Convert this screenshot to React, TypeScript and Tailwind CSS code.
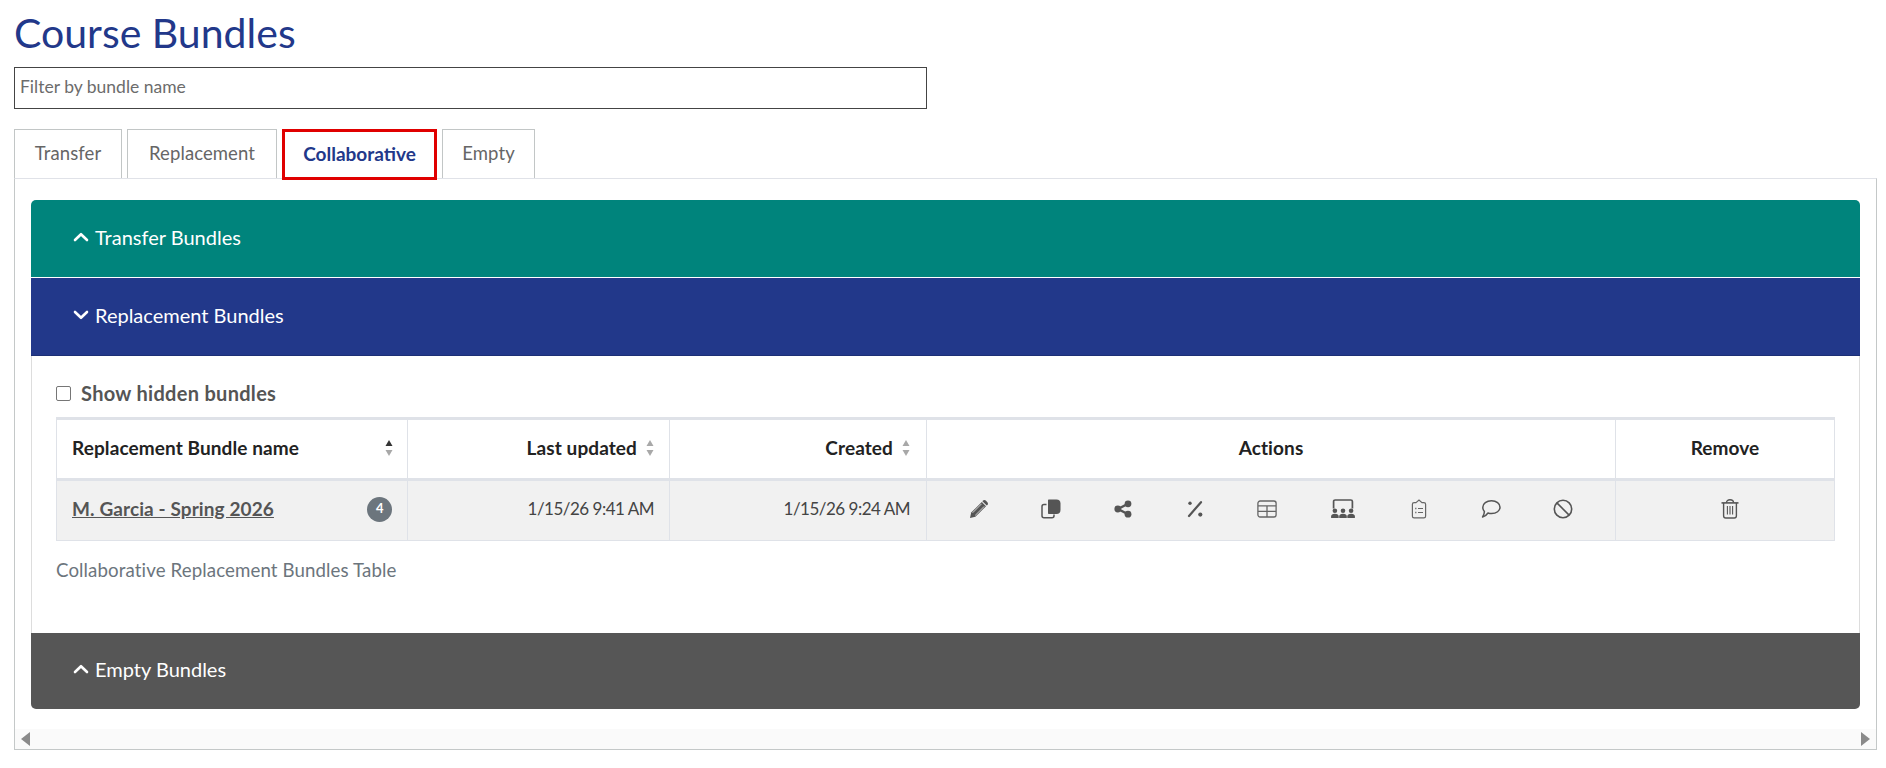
import React from "react";

const Chevron = ({ up }: { up: boolean }) => (
  <svg width="16" height="10" viewBox="0 0 16 10" className="shrink-0" fill="none" stroke="currentColor" strokeWidth="2.6" strokeLinecap="round" strokeLinejoin="round">
    {up ? <path d="M2 8 L8 2.2 L14 8" /> : <path d="M2 2 L8 7.8 L14 2" />}
  </svg>
);

const Sort = ({ active }: { active?: boolean }) => (
  <svg width="8" height="20" viewBox="0 0 8 20" className="shrink-0">
    <path d="M4 2 L7.5 8 L0.5 8 Z" fill={active ? "#333333" : "#a8a8a8"} />
    <path d="M4 18 L7.5 12 L0.5 12 Z" fill="#a8a8a8" />
  </svg>
);

const c = "#555555";
const Pencil = () => (
  <svg width="20" height="20" viewBox="0 0 20 20">
    <path d="M12.8 3 L17 7.2 L6.4 17.8 L1 19 L2.2 13.6 Z" fill={c} />
    <path d="M14 1.6 C14.8 0.8 16 0.8 16.8 1.6 L18.4 3.2 C19.2 4 19.2 5.2 18.4 6 L17.7 6.6 L13.4 2.3 Z" fill={c} />
    <path d="M3.6 13.8 L12.6 4.8 M6.2 16.4 L15.2 7.4" stroke="#f1f1f1" strokeWidth="0.8" />
  </svg>
);
const Copy = () => (
  <svg width="20" height="20" viewBox="0 0 20 20">
    <path d="M8 0.5 H15.5 C18 0.5 19.5 2 19.5 4.5 V11 C19.5 13.5 18 15 15.5 15 H8 C7.4 15 7 14.6 7 14 V1.5 C7 0.9 7.4 0.5 8 0.5 Z" fill={c} />
    <path d="M5.5 5.5 H3 C1.8 5.5 1 6.3 1 7.5 V16.8 C1 18 1.8 18.8 3 18.8 H11 C12.2 18.8 13 18 13 16.8 V15.5" fill="none" stroke={c} strokeWidth="1.5" />
  </svg>
);
const Share = () => (
  <svg width="20" height="20" viewBox="0 0 20 20">
    <path d="M15 4.8 L5 10 L15 15.2" fill="none" stroke={c} strokeWidth="2.4" />
    <circle cx="15" cy="4.8" r="3.4" fill={c} />
    <circle cx="4.8" cy="10" r="3.4" fill={c} />
    <circle cx="15" cy="15.2" r="3.4" fill={c} />
  </svg>
);
const Percent = () => (
  <svg width="20" height="20" viewBox="0 0 20 20">
    <path d="M16 3.2 L4 17" stroke={c} strokeWidth="2.2" strokeLinecap="round" />
    <circle cx="5" cy="4.2" r="1.7" fill={c} />
    <circle cx="15.3" cy="15.6" r="2.1" fill={c} />
  </svg>
);
const TableIcon = () => (
  <svg width="20" height="20" viewBox="0 0 20 20" fill="none" stroke="#666666" strokeWidth="1.3">
    <rect x="0.9" y="2" width="18.2" height="16" rx="2.2" />
    <path d="M1 6.8 H19 M1 12.3 H19 M10 6.8 V18" />
  </svg>
);
const Classroom = () => (
  <svg width="24" height="20" viewBox="0 0 24 20">
    <path d="M2.6 9.5 V2.6 C2.6 1.6 3.2 1 4.2 1 H19.8 C20.8 1 21.4 1.6 21.4 2.6 V9.5" fill="none" stroke={c} strokeWidth="1.7" />
    {[3.9, 12, 20.1].map((x) => (
      <g key={x}>
        <circle cx={x} cy="11.8" r="2.3" fill={c} />
        <path d={`M${x - 3.8} 19 V17.4 C${x - 3.8} 15.6 ${x - 2.4} 14.8 ${x} 14.8 C${x + 2.4} 14.8 ${x + 3.8} 15.6 ${x + 3.8} 17.4 V19 Z`} fill={c} />
      </g>
    ))}
  </svg>
);
const Clipboard = () => (
  <svg width="20" height="20" viewBox="0 0 20 20" fill="none" stroke="#666666" strokeWidth="1.2">
    <path d="M7 3.6 L10 1 L13 3.6 H14.9 C16 3.6 16.6 4.2 16.6 5.3 V17.2 C16.6 18.3 16 18.9 14.9 18.9 H5.1 C4 18.9 3.4 18.3 3.4 17.2 V5.3 C3.4 4.2 4 3.6 5.1 3.6 Z" />
    <path d="M9 9.5 H14 M9 13.5 H14" />
    <path d="M6.2 9.5 H7.4 M6.2 13.5 H7.4" strokeWidth="1.6" />
  </svg>
);
const Comment = () => (
  <svg width="20" height="20" viewBox="0 0 20 20" fill="none" stroke={c} strokeWidth="1.5">
    <path d="M10.5 1.8 C15.4 1.8 19 4.6 19 8.2 C19 11.8 15.4 14.6 10.5 14.6 C9.2 14.6 8 14.4 7 14 C5.6 16 3.6 17.6 1.6 18 C2.6 16.4 3.4 14.6 3.4 12.6 C2.4 11.4 1.8 9.8 1.8 8.2 C1.8 4.6 5.6 1.8 10.5 1.8 Z" strokeLinejoin="round" />
  </svg>
);
const Ban = () => (
  <svg width="20" height="20" viewBox="0 0 20 20" fill="none" stroke={c} strokeWidth="1.6">
    <circle cx="10" cy="10" r="8.7" />
    <path d="M3.9 3.9 L16.1 16.1" />
  </svg>
);
const Trash = () => (
  <svg width="20" height="20" viewBox="0 0 20 20" fill="none" stroke={c} strokeWidth="1.4">
    <path d="M6.5 3.8 C6.5 1.6 8 0.8 10 0.8 C12 0.8 13.5 1.6 13.5 3.8" />
    <path d="M1.5 3.9 H18.5" strokeWidth="1.6" />
    <path d="M3.6 4 V16.8 C3.6 18.2 4.5 19 5.8 19 H14.2 C15.5 19 16.4 18.2 16.4 16.8 V4" />
    <path d="M7.4 7 V15.5 M10 7 V15.5 M12.6 7 V15.5" strokeWidth="1.1" />
  </svg>
);

const actions = [
  { I: Pencil, w: "w-[73px]" },
  { I: Copy, w: "w-[72px]" },
  { I: Share, w: "w-[72px]" },
  { I: Percent, w: "w-[72px]" },
  { I: TableIcon, w: "w-[72px]" },
  { I: Classroom, w: "w-[80px]" },
  { I: Clipboard, w: "w-[72px]" },
  { I: Comment, w: "w-[72px]" },
  { I: Ban, w: "w-[72px]" },
];

const Tab = ({ label, w }: { label: string; w: string }) => (
  <div className={`${w} h-[49px] flex items-center justify-center border border-b-0 border-[#c2c6c6] text-[18.5px] tracking-[0.1px] text-[#666666]`}>{label}</div>
);

const Head = ({ up, label, bg, h }: { up: boolean; label: string; bg: string; h: string }) => (
  <div className={`${bg} ${h} flex items-center pb-[4px] pl-[42px] gap-[6px] text-white text-[20px]`}>
    <Chevron up={up} />
    <span>{label}</span>
  </div>
);

export default function App() {
  return (
    <div className="w-[1886px] h-[768px] overflow-hidden bg-white pl-[14px] pr-[9px] font-['Lato','Liberation_Sans',sans-serif] text-[#555555]">
      <h1 className="h-[67px] pt-[10px] text-[41px] leading-[46px] text-[#22388a]">Course Bundles</h1>
      <input
        readOnly
        placeholder="Filter by bundle name"
        className="block w-[913px] h-[42px] border border-[#444444] px-[5px] pb-[3px] text-[17.5px] placeholder:text-[#6c6c6c] outline-none"
      />
      <div className="mt-[20px] flex gap-[5px] relative z-10">
        <Tab label="Transfer" w="w-[108px]" />
        <Tab label="Replacement" w="w-[150px]" />
        <div className="w-[155px] h-[51px] -mb-[2px] flex items-center justify-center border-[3px] border-[#e00000] bg-white text-[19px] font-bold text-[#22388a]">Collaborative</div>
        <Tab label="Empty" w="w-[93px]" />
      </div>
      <div className="h-[572px] border border-t-[#e0e2e8] border-x-[#c4c8c8] border-b-[#c4c8c8] flex flex-col">
        <div className="flex-1 px-[16px] pt-[21px]">
          <div className="rounded-[5px] overflow-hidden">
            <Head up label="Transfer Bundles" bg="bg-[#00847c]" h="h-[77px]" />
            <div className="h-px bg-white" />
            <Head up={false} label="Replacement Bundles" bg="bg-[#22388a] border-b border-[#1c2f75]" h="h-[78px]" />
            <div className="h-[277px] border-x border-[#dddddd] pl-[24px] pr-[25px]">
              <label className="pt-[27px] h-[61px] flex items-start gap-[10px] text-[20px] tracking-[0.3px] font-bold leading-[20px]">
                <span className="mt-[3px] w-[15px] h-[15px] rounded-[2px] border border-[#767676] bg-white" />
                Show hidden bundles
              </label>
              <table className="table-fixed border-collapse w-[1778px] text-[17px] tracking-[-0.5px]">
                <colgroup>
                  <col className="w-[351px]" />
                  <col className="w-[262px]" />
                  <col className="w-[257px]" />
                  <col className="w-[689px]" />
                  <col className="w-[219px]" />
                </colgroup>
                <thead>
                  <tr className="h-[61px] border-t-[3px] border-b-[3px] border-[#dfe2e8] font-bold text-[19px] tracking-[0.1px] text-[#222222]">
                    <th className="border border-t-0 border-b-0 border-[#dfe2e8] pl-[15px] pr-[14px] pb-[2px]">
                      <div className="flex items-center justify-between"><span>Replacement Bundle name</span><Sort active /></div>
                    </th>
                    <th className="border-r border-[#dfe2e8] pr-[15px] pb-[2px]">
                      <div className="flex items-center justify-end gap-[9px]"><span>Last updated</span><Sort /></div>
                    </th>
                    <th className="border-r border-[#dfe2e8] pr-[16px] pb-[2px]">
                      <div className="flex items-center justify-end gap-[9px]"><span>Created</span><Sort /></div>
                    </th>
                    <th className="border-r border-[#dfe2e8] text-center pb-[2px]">Actions</th>
                    <th className="border-r border-[#dfe2e8] text-center pb-[2px]">Remove</th>
                  </tr>
                </thead>
                <tbody>
                  <tr className="h-[61px] bg-[#f1f1f1] border-b border-[#dfe2e8] text-[#444444]">
                    <td className="border-x border-[#dfe2e8] pl-[15px] pr-[15px] pb-[3px]">
                      <div className="flex items-center justify-between">
                        <span className="font-bold underline text-[#555555] text-[19px] tracking-[0.1px]">M. Garcia - Spring 2026</span>
                        <span className="w-[25px] h-[25px] rounded-full bg-[#6c757d] text-white text-[13px] font-bold flex items-center justify-center">4</span>
                      </div>
                    </td>
                    <td className="border-r border-[#dfe2e8] text-right pr-[15px] pb-[3px]">1/15/26 9:41 AM</td>
                    <td className="border-r border-[#dfe2e8] text-right pr-[16px] pb-[3px]">1/15/26 9:24 AM</td>
                    <td className="border-r border-[#dfe2e8] pl-[15px] pb-[3px]">
                      <div className="flex items-center">
                        {actions.map(({ I, w }, i) => (
                          <span key={i} className={`${w} flex justify-center`}><I /></span>
                        ))}
                      </div>
                    </td>
                    <td className="border-r border-[#dfe2e8] pb-[3px]">
                      <div className="flex justify-center pl-[9px]"><Trash /></div>
                    </td>
                  </tr>
                </tbody>
              </table>
              <p className="mt-[19px] text-[18.7px] tracking-[0.1px] leading-[20px] text-[#6c757d]">Collaborative Replacement Bundles Table</p>
            </div>
            <Head up label="Empty Bundles" bg="bg-[#565656]" h="h-[76px]" />
          </div>
        </div>
        <div className="h-[20px] bg-[#fafafa] flex items-center justify-between px-[5px]">
          <svg width="10" height="14" viewBox="0 0 10 14"><path d="M10 0 V14 L1 7 Z" fill="#8a8a8a" /></svg>
          <svg width="10" height="14" viewBox="0 0 10 14"><path d="M0 0 V14 L9 7 Z" fill="#8a8a8a" /></svg>
        </div>
      </div>
    </div>
  );
}
